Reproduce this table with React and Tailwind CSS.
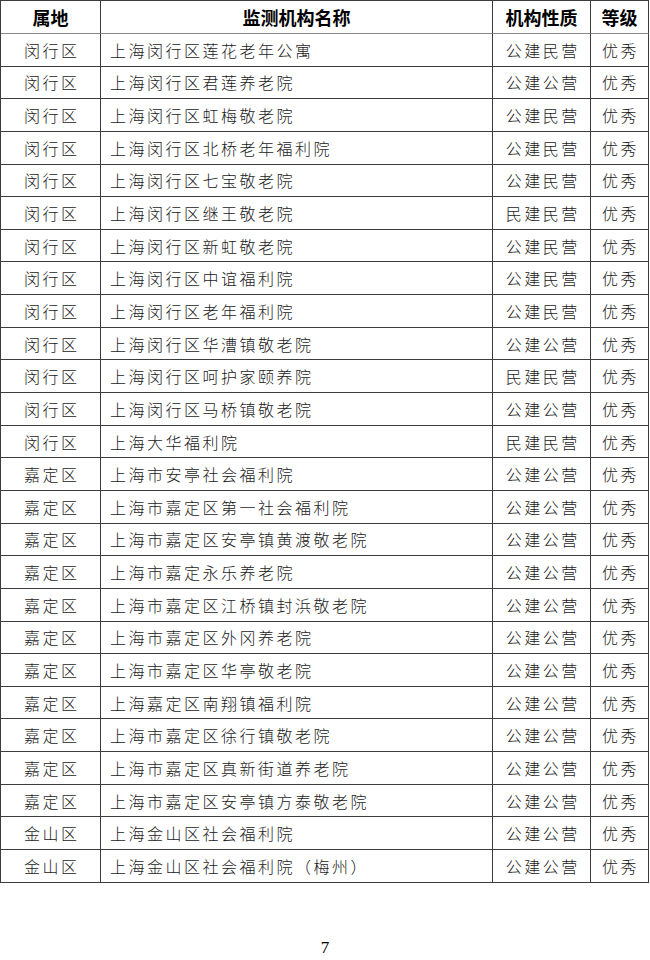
import React from "react";

const rows = [
  ["闵行区", "上海闵行区莲花老年公寓", "公建民营"],
  ["闵行区", "上海闵行区君莲养老院", "公建公营"],
  ["闵行区", "上海闵行区虹梅敬老院", "公建民营"],
  ["闵行区", "上海闵行区北桥老年福利院", "公建民营"],
  ["闵行区", "上海闵行区七宝敬老院", "公建民营"],
  ["闵行区", "上海闵行区继王敬老院", "民建民营"],
  ["闵行区", "上海闵行区新虹敬老院", "公建民营"],
  ["闵行区", "上海闵行区中谊福利院", "公建民营"],
  ["闵行区", "上海闵行区老年福利院", "公建民营"],
  ["闵行区", "上海闵行区华漕镇敬老院", "公建公营"],
  ["闵行区", "上海闵行区呵护家颐养院", "民建民营"],
  ["闵行区", "上海闵行区马桥镇敬老院", "公建公营"],
  ["闵行区", "上海大华福利院", "民建民营"],
  ["嘉定区", "上海市安亭社会福利院", "公建公营"],
  ["嘉定区", "上海市嘉定区第一社会福利院", "公建公营"],
  ["嘉定区", "上海市嘉定区安亭镇黄渡敬老院", "公建公营"],
  ["嘉定区", "上海市嘉定永乐养老院", "公建公营"],
  ["嘉定区", "上海市嘉定区江桥镇封浜敬老院", "公建公营"],
  ["嘉定区", "上海市嘉定区外冈养老院", "公建公营"],
  ["嘉定区", "上海市嘉定区华亭敬老院", "公建公营"],
  ["嘉定区", "上海嘉定区南翔镇福利院", "公建公营"],
  ["嘉定区", "上海市嘉定区徐行镇敬老院", "公建公营"],
  ["嘉定区", "上海市嘉定区真新街道养老院", "公建公营"],
  ["嘉定区", "上海市嘉定区安亭镇方泰敬老院", "公建公营"],
  ["金山区", "上海金山区社会福利院", "公建公营"],
  ["金山区", "上海金山区社会福利院（梅州）", "公建公营"],
];

const cell = "border-r border-b border-[#3c3c3c] flex items-center";

export default function App() {
  return (
    <div
      className="w-[650px] h-[960px] bg-white flex flex-col"
      style={{ fontFamily: '"Noto Sans CJK SC", "Noto Sans", sans-serif' }}
    >
      <div className="w-[649px] border-l border-t border-[#3c3c3c] flex flex-col">
        <div className="grid grid-cols-[100px_392px_98px_58px] h-[33px] text-[18px] font-bold text-black leading-none">
          <div className={`${cell} justify-center border-b-[#8a8a8a]`}>属地</div>
          <div className={`${cell} justify-center border-b-[#8a8a8a]`}>监测机构名称</div>
          <div className={`${cell} justify-center border-b-[#8a8a8a]`}>机构性质</div>
          <div className={`${cell} justify-center border-b-[#8a8a8a]`}>等级</div>
        </div>
        {rows.map((r, i) => (
          <div
            key={i}
            className="grid grid-cols-[100px_392px_98px_58px] h-[32.65px] text-[16px] font-light text-[#1a1a1a] leading-none tracking-[2.5px]"
          >
            <div className={`${cell} justify-center pl-[2.5px]`}>{r[0]}</div>
            <div className={`${cell} justify-start pl-[9px]`}>{r[1]}</div>
            <div className={`${cell} justify-center pl-[2.5px]`}>{r[2]}</div>
            <div className={`${cell} justify-center pl-[2px]`}>优秀</div>
          </div>
        ))}
      </div>
      <div
        className="mt-[52px] text-center text-[17px] text-black"
        style={{ fontFamily: '"Liberation Serif", serif' }}
      >
        7
      </div>
    </div>
  );
}
